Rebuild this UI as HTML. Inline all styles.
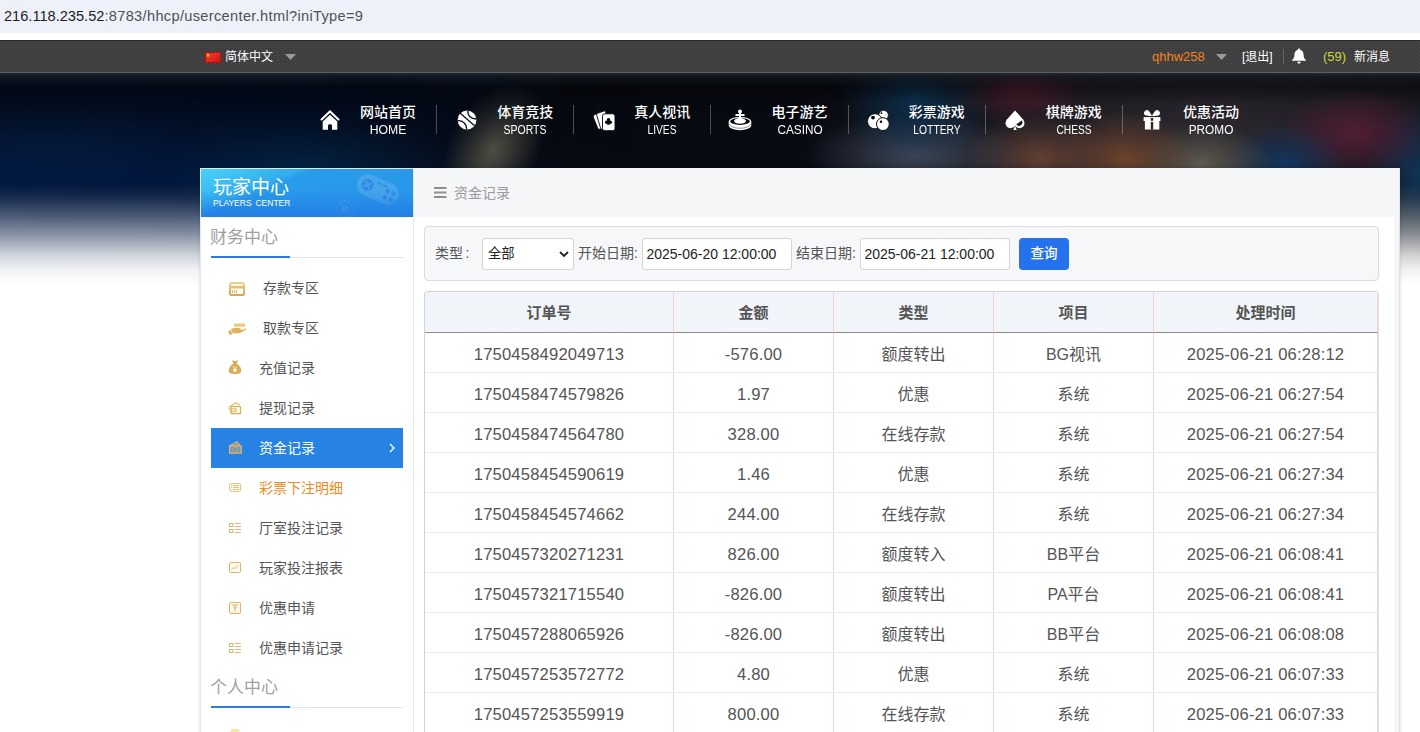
<!DOCTYPE html>
<html lang="zh-CN">
<head>
<meta charset="utf-8">
<title>玩家中心</title>
<style>
*{box-sizing:border-box;}
html,body{margin:0;padding:0;}
body{width:1420px;height:732px;overflow:hidden;position:relative;background:#fff;font-family:"Liberation Sans","Noto Sans CJK SC",sans-serif;color:#555;}
.abs{position:absolute;}
/* url bar */
#urlbar{left:0;top:0;width:1420px;height:33px;background:#eef1f9;}
#urlbar .t{position:absolute;left:4px;top:6px;font-size:14.6px;line-height:20px;color:#4d5156;white-space:nowrap;letter-spacing:0px;}
#urlbar .t b{font-weight:normal;color:#202124;letter-spacing:0;}
#urlbar .t span{letter-spacing:.33px;}
/* top dark bar */
#topbar{left:0;top:40px;width:1420px;height:33px;border-bottom:1px solid #5e5e5e;border-top:1px solid #2b2b2b;background-color:#3e3e3e;}
#topbar .it{position:absolute;top:0;height:32px;line-height:32px;font-size:12px;color:#fff;white-space:nowrap;}
/* banner bg */
#banner{left:0;top:73px;width:1420px;height:210px;background:
 radial-gradient(ellipse 140px 50px at 60px 65px,rgba(14,50,100,.35),transparent 100%),
 radial-gradient(ellipse 150px 60px at 310px 90px,rgba(8,62,92,.4),transparent 100%),
 radial-gradient(ellipse 75px 65px at 915px 27px,rgba(10,58,96,.7),transparent 100%),
 radial-gradient(ellipse 110px 42px at 915px 82px,rgba(80,90,110,.7),transparent 100%),
 radial-gradient(ellipse 70px 42px at 1022px 12px,rgba(96,30,48,.7),transparent 100%),
 radial-gradient(ellipse 75px 42px at 1040px 84px,rgba(122,76,58,.75),transparent 100%),
 radial-gradient(ellipse 70px 48px at 1125px 86px,rgba(128,76,46,.8),transparent 100%),
 radial-gradient(ellipse 70px 40px at 1202px 90px,rgba(112,108,92,.75),transparent 100%),
 radial-gradient(ellipse 62px 40px at 1284px 90px,rgba(18,58,108,.8),transparent 100%),
 radial-gradient(ellipse 75px 45px at 1356px 60px,rgba(105,28,60,.68),transparent 100%),
 radial-gradient(ellipse 60px 70px at 1425px 100px,rgba(12,62,105,.8),transparent 100%),
 radial-gradient(ellipse 420px 120px at 1210px 55px,rgba(60,54,60,.68),transparent 100%),
 linear-gradient(to right,rgba(2,24,64,1) 0px,rgba(2,22,60,.95) 300px,rgba(3,18,50,.5) 420px,rgba(3,14,40,0) 560px),
 linear-gradient(to bottom,#06070b 0px,#070910 30px,#080b14 100px,#080b14 207px);
}
#bannertop{left:0;top:73px;width:1420px;height:14px;background:linear-gradient(to bottom,rgba(70,84,98,.42) 0,rgba(50,62,76,.25) 4px,rgba(40,50,60,0) 14px);}
#bannerdark{left:0;top:73px;width:640px;height:105px;background:linear-gradient(to bottom,rgba(2,6,14,.92) 0,rgba(2,6,14,.85) 12px,rgba(2,6,14,.6) 40px,rgba(2,6,14,.3) 70px,rgba(2,6,14,0) 105px);-webkit-mask-image:linear-gradient(to right,#000 0,#000 380px,transparent 640px);mask-image:linear-gradient(to right,#000 0,#000 380px,transparent 640px);}
#bannerdark2{left:560px;top:73px;width:860px;height:30px;background:linear-gradient(to bottom,rgba(3,4,8,.8) 0,rgba(3,4,8,.5) 10px,rgba(3,4,8,0) 30px);}
#fade{left:0;top:184px;width:1420px;height:100px;background:linear-gradient(to bottom,rgba(255,255,255,0) 0%,rgba(255,255,255,.08) 13%,rgba(255,255,255,.3) 33%,rgba(255,255,255,.55) 52%,rgba(255,255,255,.8) 70%,rgba(255,255,255,.94) 85%,#fff 100%);}
#beam{left:452px;top:72px;width:90px;height:140px;background:radial-gradient(ellipse 45px 70px at 50% 55%,rgba(114,110,88,.78),rgba(100,96,78,.4) 55%,transparent 100%);transform:rotate(28deg);}
/* nav */
.nav{top:104px;height:30px;}
.nav .cn{position:absolute;left:0;top:0;width:100%;text-align:center;font-weight:500;font-size:14px;line-height:16px;color:#fff;white-space:nowrap;}
.nav .en{position:absolute;left:0;top:19px;width:100%;text-align:center;font-size:12px;line-height:14px;color:#fff;white-space:nowrap;}
.sep{top:105px;width:1px;height:29px;background:rgba(255,255,255,.28);}
.ico{top:108px;width:24px;height:24px;overflow:visible;}
/* panel */
#panel{left:200px;top:168px;width:1200px;height:600px;background:#f5f6f8;box-shadow:0 0 4px rgba(0,0,0,.13);}
#panel:before{content:"";position:absolute;right:0;top:0;width:1px;height:100%;background:#e2e3e5;}
#panel:after{content:"";position:absolute;left:0;top:0;width:213px;height:600px;border:1px solid #e3e8ee;border-right:0;border-bottom:0;pointer-events:none;}
#side{left:0;top:0;width:214px;height:600px;background:#fff;border-right:1px solid #e3e7ec;}
#sidehead{left:1px;top:1px;width:212px;height:48px;background:linear-gradient(158deg,#48d2f7 0%,#3cc0f3 16%,#31abee 31%,#2a9aea 35%,#2896e9 100%);overflow:hidden;}
#sidehead:after{content:"";position:absolute;left:0;top:0;width:100%;height:100%;background:linear-gradient(to bottom,rgba(30,110,230,0) 0%,rgba(30,110,230,0) 45%,rgba(28,105,228,.55) 100%);}
#sidehead .cn{position:absolute;left:12px;top:8px;font-size:19px;line-height:22px;color:#fff;white-space:nowrap;z-index:2;}
#sidehead .en{position:absolute;left:12px;top:29px;font-size:8.500px;line-height:10px;color:#fff;white-space:nowrap;letter-spacing:0;word-spacing:1.500px;z-index:2;}
.sect{left:11px;width:192px;height:40px;border-bottom:1px solid #e4e4e4;}
.sect span{position:absolute;left:-1px;top:8px;font-size:17px;line-height:24px;color:#a0a0a0;white-space:nowrap;}
.sect i{position:absolute;left:0;bottom:-1px;width:79px;height:2px;background:#2a7de1;}
.mi{left:11px;width:192px;height:40px;line-height:40px;font-size:14px;color:#555;white-space:nowrap;}
.mi span{position:absolute;left:48px;top:0;}
.mi.wide span{left:52px;}
.mi.act{background:#2683e3;color:#fff;}
.mi.or{color:#f08a24;}
.mi svg{position:absolute;}
/* content */
#chead{left:213px;top:0;width:987px;height:49px;}
#chead .t{position:absolute;left:41px;top:15px;font-size:14px;line-height:20px;color:#9a9a9a;white-space:nowrap;}
#cbody{left:214px;top:49px;width:980px;height:560px;background:#fff;}
#filter{left:224px;top:58px;width:955px;height:55px;background:#f6f7f9;border:1px solid #d9dde1;border-radius:4px;}
#filter .lb{position:absolute;top:16px;font-size:14px;line-height:20px;color:#555;white-space:nowrap;}
#filter .inp{position:absolute;top:11px;height:32px;background:#fff;border:1px solid #d4d4d4;border-radius:3px;font-size:14px;line-height:30px;color:#222;padding-left:3.400px;white-space:nowrap;}
#filter .btn{position:absolute;left:594px;top:11px;width:50px;height:32px;background:#2672ec;border-radius:4px;color:#fff;font-size:13.500px;font-weight:500;line-height:32px;text-align:center;}
/* table */
#tbl{left:224px;top:123px;width:955px;border-collapse:separate;border-spacing:0;table-layout:fixed;border-top:1px solid #cfd3d7;border-left:1px solid #cfd3d7;border-right:1px solid #dde1e6;border-top-left-radius:4px;border-top-right-radius:4px;overflow:hidden;}
#tbl th{height:41px;padding:0 0 2px 0 !important;background:#f1f4f8;font-size:15px;font-weight:700;color:#555;text-align:center;border-bottom:1px solid #978989;border-right:1px solid #f4d3d3;padding:0;}
#tbl td{height:40px;font-size:16.6px;color:#555;text-align:center;border-bottom:1px solid #ececec;border-right:1px solid #f4d3d3;padding:0;background:#fff;}
#tbl td.cj{font-size:16px;}
#tbl td.n{padding-top:4px;letter-spacing:.18px;}
</style>
</head>
<body>
<div id="urlbar" class="abs"><div class="t"><b>216.118.235.52</b><span>:8783/hhcp/usercenter.html?iniType=9</span></div></div>

<div id="banner" class="abs"></div>
<div id="beam" class="abs"></div>
<div id="bannerdark" class="abs"></div>
<div id="bannerdark2" class="abs"></div>
<div id="bannertop" class="abs"></div>
<div id="fade" class="abs"></div>

<div id="topbar" class="abs">
  <svg class="abs" style="left:0;top:0" width="1420" height="31"><defs><pattern id="dots" width="4" height="4" patternUnits="userSpaceOnUse"><rect x="1" y="0" width="1" height="1" fill="#4e4e4e"/><rect x="3" y="2" width="1" height="1" fill="#4e4e4e"/></pattern></defs><rect width="1420" height="31" fill="url(#dots)"/></svg>
  <svg class="abs" style="left:205px;top:11px" width="16" height="11" viewBox="0 0 16 11"><defs><linearGradient id="fg" x1="0" y1="0" x2="1" y2="1"><stop offset="0" stop-color="#f03a30"/><stop offset=".5" stop-color="#e62a22"/><stop offset="1" stop-color="#c80f10"/></linearGradient></defs><rect x=".5" y=".5" width="15" height="10" fill="url(#fg)" stroke="#b50e0e"/><polygon points="3,1.2 3.5,2.6 5,2.6 3.8,3.5 4.3,5 3,4.1 1.7,5 2.2,3.5 1,2.6 2.5,2.6" fill="#ffde00"/></svg>
  <div class="it" style="left:225px">简体中文</div>
  <svg class="abs" style="left:285px;top:13px" width="11" height="6" viewBox="0 0 11 6"><polygon points="0,0 11,0 5.5,6" fill="#9a9a9a"/></svg>
  <div class="it" style="left:1152px;color:#f58220;font-size:13px;">qhhw258</div>
  <svg class="abs" style="left:1216px;top:13px" width="11" height="6" viewBox="0 0 11 6"><polygon points="0,0 11,0 5.5,6" fill="#9a9a9a"/></svg>
  <div class="it" style="left:1242px">[退出]</div>
  <div class="abs" style="left:1283px;top:8px;width:1px;height:15px;background:#666"></div>
  <svg class="abs" style="left:1291px;top:7px" width="16" height="17" viewBox="0 0 15 16"><path d="M7.5 0.5c.7 0 1.1.5 1.1 1.1 2 .6 3.200 2.300 3.200 4.500 0 2.600.6 3.900 2.200 5.100v.8H1v-.8c1.600-1.200 2.200-2.500 2.200-5.100 0-2.200 1.200-3.900 3.200-4.500 0-.6.400-1.100 1.100-1.100zM5.800 13h3.400c0 1-.8 1.700-1.700 1.700S5.800 14 5.800 13z" fill="#fff"/></svg>
  <div class="it" style="left:1323px;color:#c8d83a;font-size:13px;">(59)</div>
  <div class="it" style="left:1354px">新消息</div>
</div>

<!-- NAV -->
<div id="nav">
<svg class="abs ico" style="left:317.8px" viewBox="0 0 24 24"><path d="M3.500 11.500 L12 3.400 L20.500 11.500" fill="none" stroke="#fff" stroke-width="2.100" stroke-linecap="round" stroke-linejoin="miter"/><path d="M12 6.700 L4.700 13.500 V21.200 Q4.700 21.700 5.200 21.700 H10 V17.600 Q10 16.200 12 16.200 Q14 16.200 14 17.600 V21.700 H18.800 Q19.300 21.700 19.300 21.200 V13.500 Z" fill="#fff"/></svg>
<div class="abs nav" style="left:348.0px;width:80px"><div class="cn">网站首页</div><div class="en" style="transform:scaleX(1.02)">HOME</div></div>
<div class="abs sep" style="left:436.0px"></div>
<svg class="abs ico" style="left:454.8px" viewBox="0 0 24 24"><circle cx="12" cy="12" r="9.400" fill="#fff"/><path d="M5 4.900 L19.600 17.800 M12.900 2.600 C12.400 7.800 16 11 21.400 11 M2.600 12.700 C8 12.400 11.900 16 11.600 21.400" fill="none" stroke="#0c1020" stroke-width="1.300"/></svg>
<div class="abs nav" style="left:485.2px;width:80px"><div class="cn">体育竞技</div><div class="en" style="transform:scaleX(0.873)">SPORTS</div></div>
<div class="abs sep" style="left:573.2px"></div>
<svg class="abs ico" style="left:591.0px" viewBox="0 0 24 24"><g fill="#fff" stroke="#05060c" stroke-width=".9"><path d="M3.200 7 L8.500 3.800 Q10 3.200 10.600 4.600 L13 20 L8.600 21.200 Q7.300 21.500 6.700 20.200 L2.200 9 Q1.800 7.800 3.200 7 Z"/><path d="M6.700 5.300 L13 2.900 Q14.500 2.700 14.800 4 L15.500 20.500 L11.300 21.300 Q10 21.400 9.600 20.200 L5.700 7.200 Q5.400 5.900 6.700 5.300 Z"/><rect x="11.500" y="5.800" width="12.500" height="16.900" rx="2.300"/></g><g fill="#05060c"><circle cx="17.500" cy="11.700" r="1.750"/><circle cx="15.700" cy="14.300" r="1.750"/><circle cx="19.300" cy="14.300" r="1.750"/><path d="M16.900 13 h1.200 l.8 3.800 h-2.800z"/></g></svg>
<div class="abs nav" style="left:622.3px;width:80px"><div class="cn">真人视讯</div><div class="en" style="transform:scaleX(0.854)">LIVES</div></div>
<div class="abs sep" style="left:710.3px"></div>
<svg class="abs ico" style="left:727.9px" viewBox="0 0 24 24"><path d="M.700 13.500 A11.300 4.600 0 0 1 23.300 13.500 V17.600 A11.300 4.600 0 0 1 .700 17.600 Z" fill="#fff"/><ellipse cx="12" cy="13.400" rx="9.900" ry="3.500" fill="#05060c"/><path d="M1.300 16.300 C3.500 21.600 20.500 21.600 22.700 16.300" fill="none" stroke="#05060c" stroke-width=".55" opacity=".8"/><ellipse cx="12" cy="12.900" rx="6" ry="2.800" fill="#fff"/><rect x="11" y="3" width="2" height="9.500" fill="#fff"/><circle cx="12" cy="3.500" r="2" fill="#fff"/><rect x="7.200" y="5.900" width="9.600" height="2" rx="1" fill="#fff"/></svg>
<div class="abs nav" style="left:759.5px;width:80px"><div class="cn">电子游艺</div><div class="en" style="transform:scaleX(0.98)">CASINO</div></div>
<div class="abs sep" style="left:847.5px"></div>
<svg class="abs ico" style="left:865.0px" viewBox="0 0 24 24"><g fill="#fff"><circle cx="18.600" cy="7.200" r="4.700" stroke="#05060c" stroke-width=".6"/><circle cx="10" cy="13.300" r="7.500" stroke="#05060c" stroke-width=".8"/><circle cx="17.900" cy="16.100" r="6.400" stroke="#05060c" stroke-width="1"/></g><g fill="#05060c"><circle cx="16.500" cy="5.200" r=".85"/><circle cx="8" cy="9.550" r="1.900"/><circle cx="16" cy="13.800" r="1.250"/></g></svg>
<div class="abs nav" style="left:896.7px;width:80px"><div class="cn">彩票游戏</div><div class="en" style="transform:scaleX(0.858)">LOTTERY</div></div>
<div class="abs sep" style="left:984.7px"></div>
<svg class="abs ico" style="left:1003.3px" viewBox="0 0 24 24"><g fill="#fff"><path d="M12 2.400 L20.600 12 L16.600 19 L12 17.500 L7.400 19 L3.400 12 Z"/><circle cx="7.500" cy="15.200" r="4.950"/><circle cx="16.500" cy="15.200" r="4.950"/><path d="M12 17.500 L13.700 22.100 H10.300 Z"/></g><path d="M13.340 16.330 L18.800 12.600 A3.300 3.300 0 0 1 13.340 16.330 Z" fill="#1a1520"/></svg>
<div class="abs nav" style="left:1033.8px;width:80px"><div class="cn">棋牌游戏</div><div class="en" style="transform:scaleX(0.85)">CHESS</div></div>
<div class="abs sep" style="left:1121.8px"></div>
<svg class="abs ico" style="left:1140.0px" viewBox="0 0 24 24"><g fill="#fff"><path d="M12 7.900 C10.500 5.500 8.800 2 7 2.100 C5 2.200 3.500 4.500 4.200 6.200 C4.800 7.700 8 7.900 12 7.900 Z"/><path d="M12 7.900 C13.500 5.500 15.200 2 17 2.100 C19 2.200 20.500 4.500 19.800 6.200 C19.200 7.700 16 7.900 12 7.900 Z"/><rect x="3.600" y="9.100" width="16.800" height="4"/><rect x="4.900" y="13" width="14.400" height="8.600" rx=".5"/></g><rect x="10.800" y="10" width="2.400" height="2.800" fill="#3a2218"/><rect x="10.800" y="13.900" width="2.400" height="7.700" fill="#3a2218"/></svg>
<div class="abs nav" style="left:1171.0px;width:80px"><div class="cn">优惠活动</div><div class="en" style="transform:scaleX(0.985)">PROMO</div></div>
</div><!--/nav-->

<div id="panel" class="abs">
  <div id="side" class="abs">
<div class="abs sect" style="top:50px"><span>财务中心</span><i></i></div>
<div class="abs mi wide" style="top:100px"><svg style="left:17px;top:13px" width="18" height="16" viewBox="0 0 18 16"><defs><linearGradient id="gg" x1="0" y1="0" x2="0" y2="1"><stop offset="0" stop-color="#ecd08a"/><stop offset="1" stop-color="#d6a650"/></linearGradient></defs><rect x="2" y="2" width="14" height="12" rx="1.800" fill="#fffdf8" stroke="url(#gg)" stroke-width="2"/><path d="M2 6.200h14" stroke="#e4c070" stroke-width="2.600"/><path d="M3 4.300h12" stroke="#fff8e8" stroke-width="1"/><path d="M4.600 9.300v2.600M6.600 9.300v2.600M8.600 9.300v2.600" stroke="#d6a650" stroke-width="1"/></svg><span>存款专区</span></div>
<div class="abs mi wide" style="top:140px"><svg style="left:16px;top:14px" width="20" height="15" viewBox="0 0 20 15"><rect x="7.200" y="1.300" width="10.800" height="3.700" fill="#efd590"/><path d="M7.200 3.100h10.800" stroke="#e6c676" stroke-width="1.200"/><path d="M1.100 9.500L3.500 8 5.500 11.800 3.100 13.300z" fill="#d8ac58"/><path d="M4 7.700C5 6.600 6.300 6 7.500 6H12c1 0 1.800.7 1.600 1.600l2 .3 2.600-1.300c.8-.3 1.300.5.600 1.100l-3 1.900c-1.300.9-3 1.700-4.600 1.700H5.800z" fill="#dcb461"/></svg><span>取款专区</span></div>
<div class="abs mi " style="top:180px"><svg style="left:17px;top:12px" width="14" height="15" viewBox="0 0 14 15"><path d="M4 .6c1-.4 1.800.5 3 .5s2-.9 3-.5L8.700 3.700c3 1.500 4.600 4.300 4.600 6.900 0 2.400-1.700 3.600-6.300 3.600S.7 13 .7 10.600c0-2.600 1.600-5.400 4.600-6.900z" fill="#d8ad58"/><path d="M5.100 6.600l1.900 2.200 1.900-2.200M7 8.800v3.400M5.100 9.600h3.800M5.100 11h3.800" stroke="#fff" stroke-width=".9" fill="none"/></svg><span>充值记录</span></div>
<div class="abs mi " style="top:220px"><svg style="left:17px;top:14px" width="13.500" height="12.500" viewBox="0 0 15 14"><path d="M1 6.200L8.300.9l5 2.600" fill="none" stroke="#e2bd6c" stroke-width="1.300"/><path d="M1 6.200l2.800 6.500" stroke="#e2bd6c" stroke-width="1.300"/><rect x="3.600" y="5" width="10.400" height="8" rx=".8" fill="#fff6e0" stroke="#d8ad58" stroke-width="1.300"/><path d="M4 7.600h5v2.800H4" fill="none" stroke="#d8ad58" stroke-width="1"/></svg><span>提现记录</span></div>
<div class="abs mi act" style="top:260px"><svg style="left:17px;top:13px" width="14" height="13" viewBox="0 0 14 13"><path d="M1.200 5.200L8.800.8l3.300 3.600" fill="#b9a17a" stroke="#dcb878" stroke-width="1.100"/><path d="M6 2.500l1.500 1.800M8 1.600l1.300 1.500" stroke="#2683e3" stroke-width=".8"/><rect x="1.600" y="5" width="11.600" height="7.200" fill="#8a93a0" stroke="#dcb878" stroke-width="1.200"/><ellipse cx="7.400" cy="8.600" rx="2.400" ry="1.900" fill="#2683e3" stroke="#dcb878" stroke-width=".9"/><circle cx="7.400" cy="8.600" r=".8" fill="#dcb878"/></svg><span>资金记录</span><svg style="left:178px;top:15px" width="6" height="10" viewBox="0 0 6 10"><path d="M1 1l4 4-4 4" stroke="#fff" stroke-width="1.300" fill="none"/></svg></div>
<div class="abs mi or" style="top:300px"><svg style="left:18px;top:15px" width="12" height="9" viewBox="0 0 12 9"><rect x=".5" y=".5" width="11" height="8" rx="1.200" fill="#fffaf0" stroke="#e6c58c"/><path d="M2 2.500h1M4 2.500h6M2 4.500h1M4 4.500h6M2 6.500h1M4 6.500h6" stroke="#e3c080" stroke-width="1"/></svg><span>彩票下注明细</span></div>
<div class="abs mi " style="top:340px"><svg style="left:18px;top:15px" width="12" height="10" viewBox="0 0 12 10"><rect x=".5" y=".5" width="3.500" height="3" fill="#fff" stroke="#dcb56a" stroke-width="1"/><rect x=".5" y="6.500" width="3.500" height="3" fill="#fff" stroke="#dcb56a" stroke-width="1"/><path d="M6 .500h6M6 3.500h6M6 6.500h6M6 9.500h6" stroke="#dcb56a" stroke-width="1"/></svg><span>厅室投注记录</span></div>
<div class="abs mi " style="top:380px"><svg style="left:18px;top:14px" width="12" height="11" viewBox="0 0 12 11"><rect x=".5" y=".5" width="11" height="10" rx="1" fill="#fdf8ec" stroke="#dcb56a"/><path d="M2.500 7.500l2-2 1.500 1.200 3-3.200" stroke="#dcb56a" stroke-width="1" fill="none"/></svg><span>玩家投注报表</span></div>
<div class="abs mi " style="top:420px"><svg style="left:18px;top:14px" width="12" height="12" viewBox="0 0 12 12"><rect x=".5" y=".5" width="11" height="11" rx="1" fill="#fdf8ec" stroke="#dcb56a"/><path d="M3 3h6M6 3v6.500M4.300 5l1.700 1.500L7.700 5" stroke="#dcb56a" stroke-width="1" fill="none"/></svg><span>优惠申请</span></div>
<div class="abs mi " style="top:460px"><svg style="left:18px;top:15px" width="12" height="10" viewBox="0 0 12 10"><rect x=".5" y=".5" width="3.500" height="3" fill="#fff" stroke="#dcb56a" stroke-width="1"/><rect x=".5" y="6.500" width="3.500" height="3" fill="#fff" stroke="#dcb56a" stroke-width="1"/><path d="M6 .500h6M6 3.500h6M6 6.500h6M6 9.500h6" stroke="#dcb56a" stroke-width="1"/></svg><span>优惠申请记录</span></div>
<div class="abs sect" style="top:500px"><span>个人中心</span><i></i></div>
<svg class="abs" style="left:30px;top:561px" width="10" height="8" viewBox="0 0 10 8"><rect x=".5" y="0" width="9" height="10" rx="2.500" fill="#fbe2a0"/></svg>
</div><!--/side-->
  <div id="sidehead" class="abs"><svg class="abs" style="left:0;top:0" width="212" height="48" viewBox="0 0 212 48"><g transform="rotate(24 176 20)"><rect x="155" y="9" width="44" height="22" rx="11" fill="#fff" opacity=".13"/><circle cx="165.500" cy="20" r="6" fill="#1e78e0" opacity=".55"/><path d="M162 16.500l7 7M169 16.500l-7 7" stroke="#4aa8ee" stroke-width="1.500" opacity=".8"/><rect x="174" y="13" width="4" height="1.800" fill="#1e78e0" opacity=".5"/><rect x="180" y="13" width="4" height="1.800" fill="#1e78e0" opacity=".5"/><g fill="#1e78e0" opacity=".5"><circle cx="186.500" cy="17.500" r="2.300"/><circle cx="193" cy="17.500" r="2.300"/><circle cx="186.500" cy="24.500" r="2.300"/><circle cx="193" cy="24.500" r="2.300"/></g></g><circle cx="144" cy="40" r="8" fill="none" stroke="#fff" stroke-width="2" stroke-dasharray="3 2" opacity=".1"/><circle cx="144" cy="40" r="4" fill="#fff" opacity=".1"/></svg><div class="cn">玩家中心</div><div class="en">PLAYERS CENTER</div></div>
  <div id="chead" class="abs"><svg class="abs" style="left:21px;top:19px" width="13" height="11" viewBox="0 0 13 11"><path d="M0 1h12.500M0 5.500h12.500M0 10h12.500" stroke="#8e8e8e" stroke-width="1.900"/></svg><div class="t">资金记录</div></div>
  <div id="cbody" class="abs"></div>
  <div id="filter" class="abs">
<div class="lb" style="left:10px">类型<span style="margin-left:2.500px">:</span></div>
<div class="inp" style="left:57px;width:92px;font-size:13.300px;padding-left:5px">全部<svg style="position:absolute;right:4px;top:12px" width="10" height="7" viewBox="0 0 10 7"><path d="M1 1l4 4 4-4" stroke="#222" stroke-width="1.800" fill="none"/></svg></div>
<div class="lb" style="left:153px">开始日期:</div>
<div class="inp" style="left:217px;width:150px">2025-06-20 12:00:00</div>
<div class="lb" style="left:371px">结束日期:</div>
<div class="inp" style="left:435px;width:150px">2025-06-21 12:00:00</div>
<div class="btn">查询</div>
</div><!--/filter-->
<table id="tbl" class="abs"><colgroup><col style="width:249px"><col style="width:160px"><col style="width:160px"><col style="width:160px"><col style="width:224px"></colgroup>
<tr><th>订单号</th><th>金额</th><th>类型</th><th>项目</th><th>处理时间</th></tr>
<tr><td class="n">1750458492049713</td><td class="n">-576.00</td><td class="cj">额度转出</td><td class="cj">BG视讯</td><td class="n">2025-06-21 06:28:12</td></tr>
<tr><td class="n">1750458474579826</td><td class="n">1.97</td><td class="cj">优惠</td><td class="cj">系统</td><td class="n">2025-06-21 06:27:54</td></tr>
<tr><td class="n">1750458474564780</td><td class="n">328.00</td><td class="cj">在线存款</td><td class="cj">系统</td><td class="n">2025-06-21 06:27:54</td></tr>
<tr><td class="n">1750458454590619</td><td class="n">1.46</td><td class="cj">优惠</td><td class="cj">系统</td><td class="n">2025-06-21 06:27:34</td></tr>
<tr><td class="n">1750458454574662</td><td class="n">244.00</td><td class="cj">在线存款</td><td class="cj">系统</td><td class="n">2025-06-21 06:27:34</td></tr>
<tr><td class="n">1750457320271231</td><td class="n">826.00</td><td class="cj">额度转入</td><td class="cj">BB平台</td><td class="n">2025-06-21 06:08:41</td></tr>
<tr><td class="n">1750457321715540</td><td class="n">-826.00</td><td class="cj">额度转出</td><td class="cj">PA平台</td><td class="n">2025-06-21 06:08:41</td></tr>
<tr><td class="n">1750457288065926</td><td class="n">-826.00</td><td class="cj">额度转出</td><td class="cj">BB平台</td><td class="n">2025-06-21 06:08:08</td></tr>
<tr><td class="n">1750457253572772</td><td class="n">4.80</td><td class="cj">优惠</td><td class="cj">系统</td><td class="n">2025-06-21 06:07:33</td></tr>
<tr><td class="n">1750457253559919</td><td class="n">800.00</td><td class="cj">在线存款</td><td class="cj">系统</td><td class="n">2025-06-21 06:07:33</td></tr>
</table>











</div>
</body>
</html>
